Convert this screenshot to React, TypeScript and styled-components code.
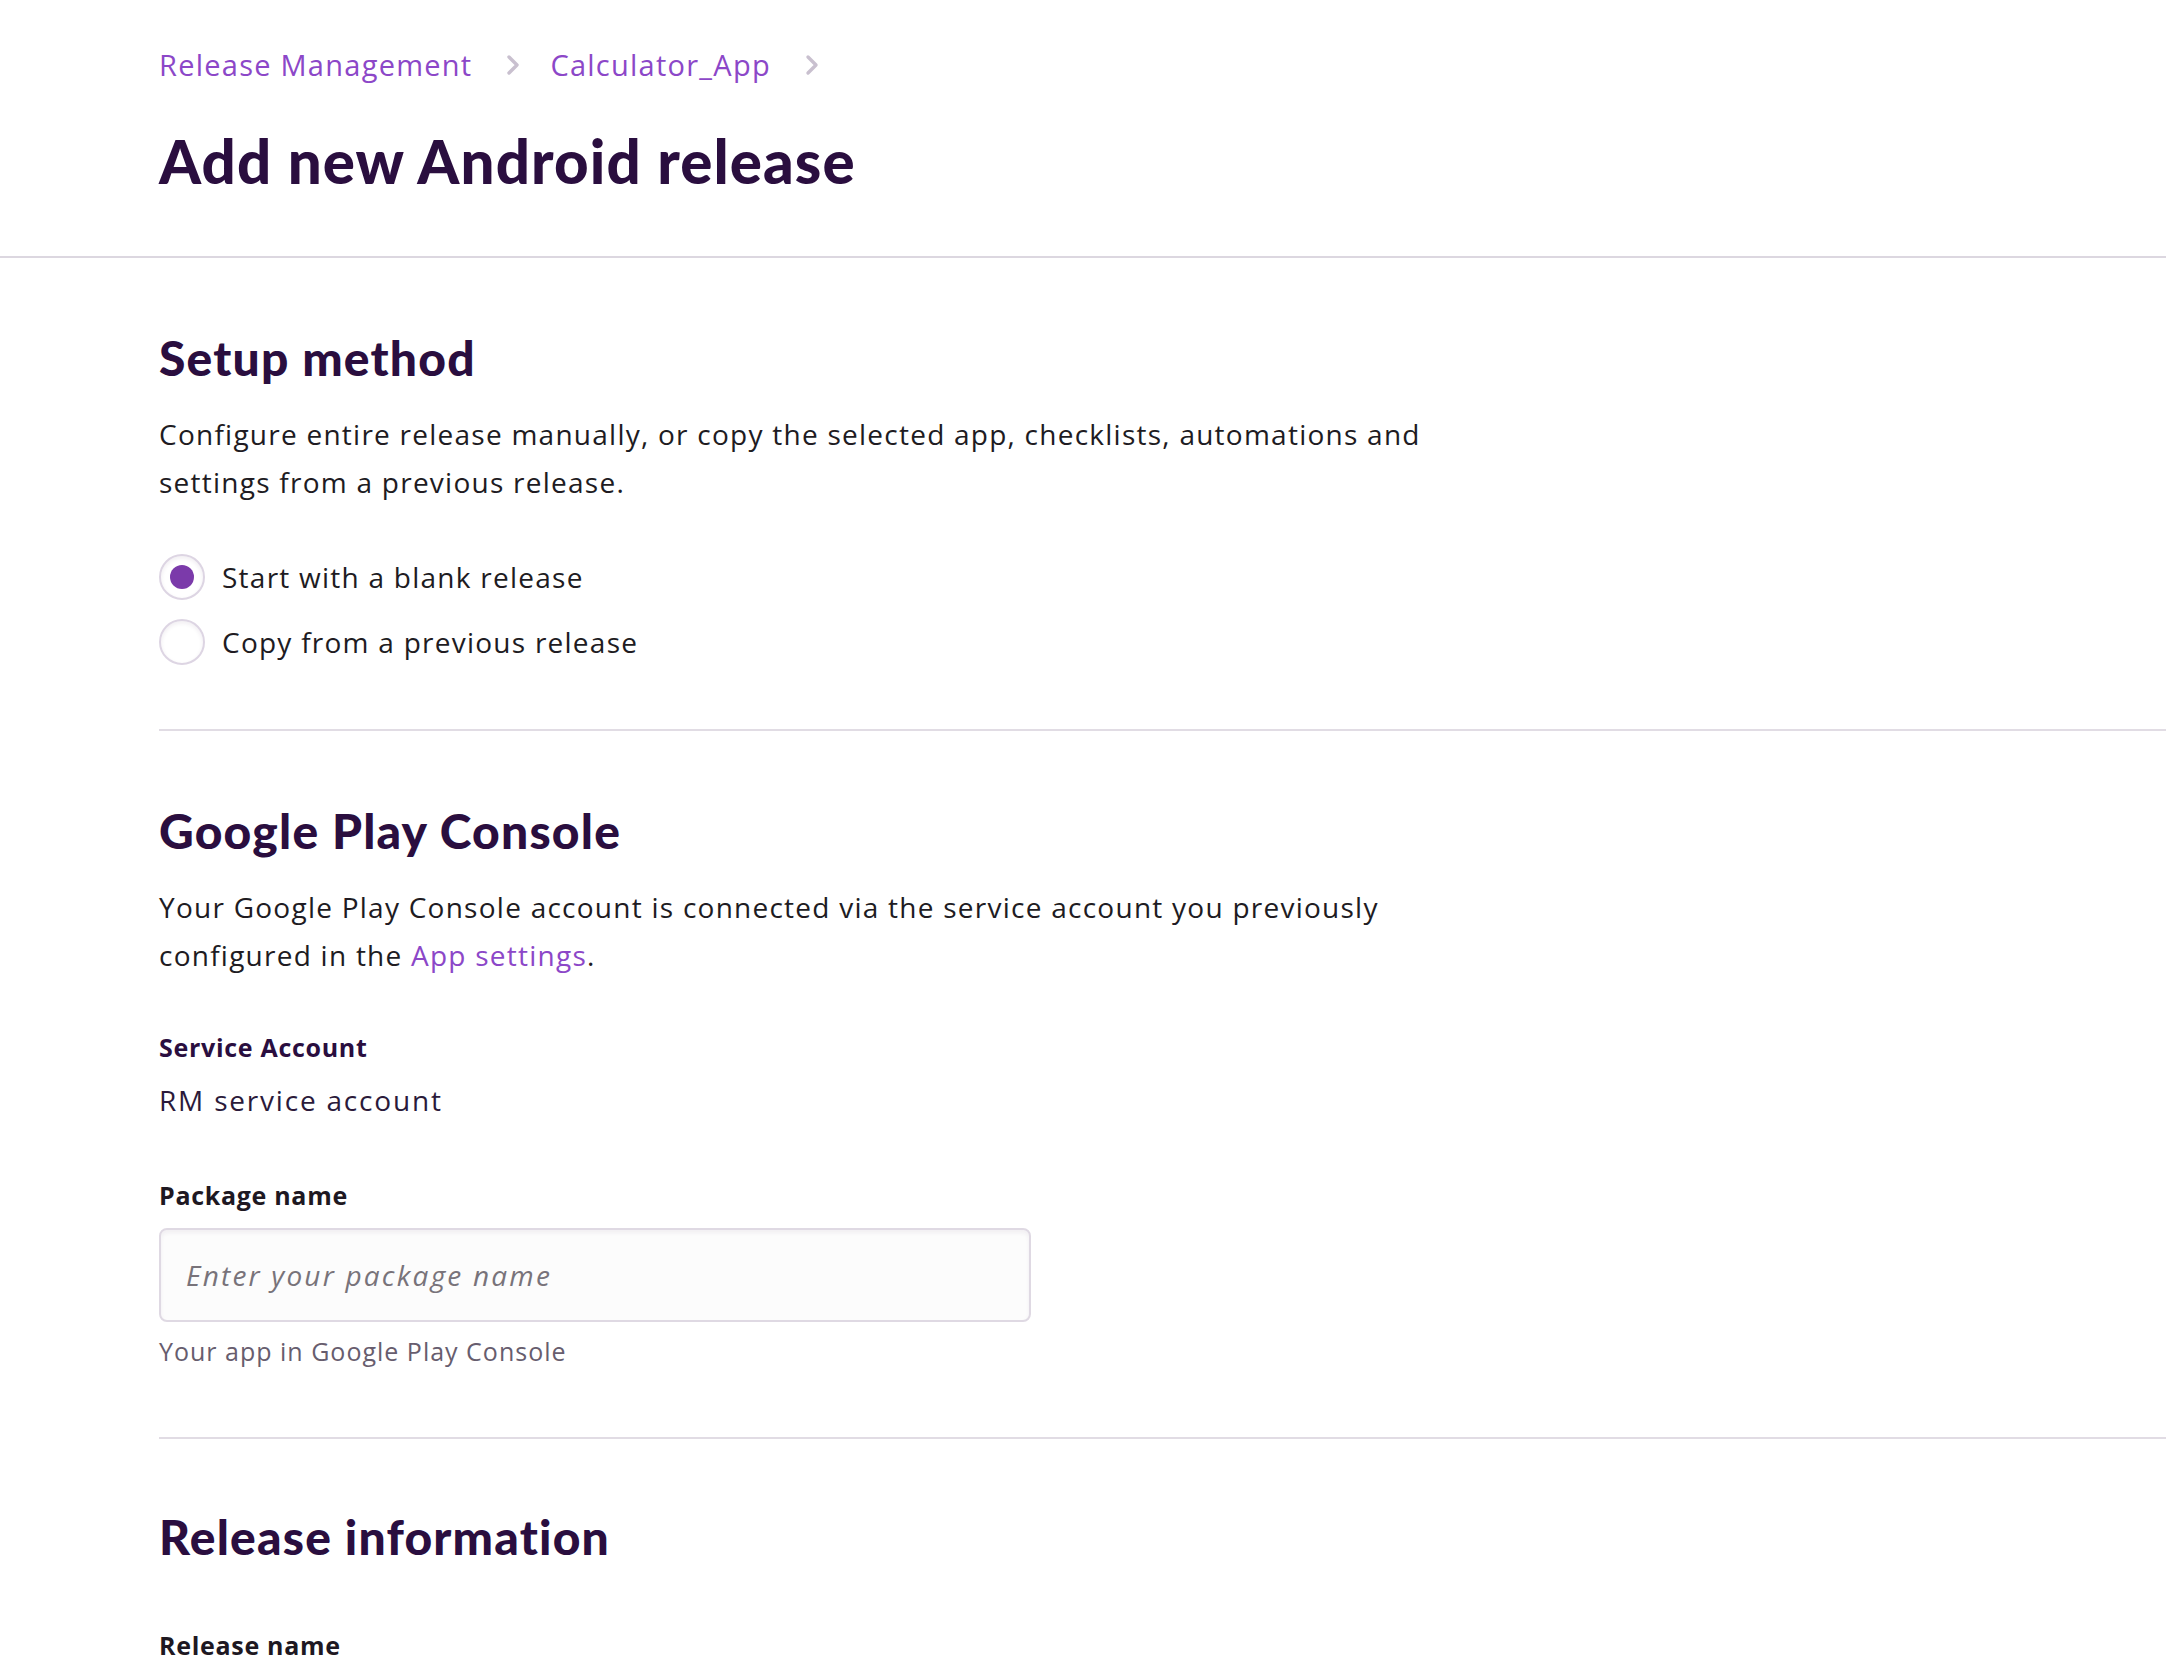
import React from "react";
import styled, { createGlobalStyle } from "styled-components";

const GlobalStyle = createGlobalStyle`
  html, body {
    margin: 0;
    padding: 0;
    background: #ffffff;
    font-family: "Open Sans", "Noto Sans", sans-serif;
    color: #201b22;
  }
  * { box-sizing: border-box; }
`;

const Page = styled.div`
  min-height: 1662px;
  background: #ffffff;
`;

const Header = styled.header`
  padding: 45px 0 60px 159px;
  border-bottom: 2px solid #dcd7e0;
`;

const Breadcrumbs = styled.nav`
  display: flex;
  align-items: center;
  height: 40px;
`;

const Crumb = styled.a`
  font-size: 29px;
  line-height: 40px;
  color: #8c47c8;
  text-decoration: none;
  letter-spacing: 1.25px;
`;

const Chevron = styled.span`
  display: inline-flex;
  align-items: center;
  margin: 0 30px 0 34px;
  color: #c9c0cf;
`;

const Title = styled.h1`
  margin: 41px 0 0;
  font-family: Lato, "Open Sans", sans-serif;
  font-size: 60px;
  line-height: 70px;
  font-weight: 900;
  color: #2a0e3f;
  letter-spacing: 1.1px;
`;

const Main = styled.main`
  padding-left: 159px;
`;

const Section = styled.section<{ $top: number; $bottom: number; $last?: boolean }>`
  padding: ${(p) => p.$top}px 0 ${(p) => p.$bottom}px;
  border-bottom: ${(p) => (p.$last ? "none" : "2px solid #e1dce4")};
`;

const Heading = styled.h2`
  margin: 0;
  font-family: Lato, "Open Sans", sans-serif;
  font-size: 48px;
  line-height: 56px;
  font-weight: 900;
  color: #2a0e3f;
  letter-spacing: 1.2px;
`;

const Paragraph = styled.p`
  margin: 24px 0 0;
  max-width: 1300px;
  font-size: 28px;
  line-height: 48px;
  color: #201b22;
  letter-spacing: 1.25px;
`;

const Link = styled.a`
  color: #8c47c8;
  text-decoration: none;
`;

const RadioGroup = styled.div`
  margin-top: 47px;
  display: flex;
  flex-direction: column;
  gap: 17px;
`;

const RadioRow = styled.label`
  display: flex;
  align-items: center;
  gap: 17px;
  height: 48px;
  font-size: 28px;
  letter-spacing: 1.25px;
  color: #201b22;
  cursor: pointer;
`;

const RadioCircle = styled.span<{ $checked?: boolean }>`
  width: 46px;
  height: 46px;
  border-radius: 50%;
  border: 2px solid #ddd5e3;
  background: #ffffff;
  box-shadow: inset 0 2px 4px rgba(60, 30, 80, 0.08);
  display: inline-flex;
  align-items: center;
  justify-content: center;
  flex-shrink: 0;
  &::after {
    content: "";
    display: ${(p) => (p.$checked ? "block" : "none")};
    width: 24px;
    height: 24px;
    border-radius: 50%;
    background: #7b3aaa;
  }
`;

const FieldLabel = styled.div<{ $mt: number; $purple?: boolean }>`
  margin-top: ${(p) => p.$mt}px;
  font-size: 25px;
  line-height: 32px;
  font-weight: 700;
  letter-spacing: 0.7px;
  color: ${(p) => (p.$purple ? "#2a0e3f" : "#1e1822")};
`;

const FieldValue = styled.div`
  margin-top: 19px;
  font-size: 28px;
  line-height: 36px;
  letter-spacing: 1.8px;
  color: #2b1a3a;
`;

const Input = styled.input`
  display: block;
  margin-top: 17px;
  width: 872px;
  height: 94px;
  padding: 0 25px;
  border: 2px solid #dfd9e3;
  border-radius: 8px;
  background: #fcfcfc;
  box-shadow: inset 0 3px 4px rgba(60, 30, 80, 0.06);
  font-family: inherit;
  font-size: 28px;
  letter-spacing: 2.2px;
  color: #201b22;
  outline: none;
  &::placeholder {
    color: #78737a;
    font-style: italic;
  }
`;

const Helper = styled.div`
  margin-top: 13px;
  font-size: 25px;
  line-height: 32px;
  letter-spacing: 1px;
  color: #675d6e;
`;

const ChevronIcon = () => (
  <svg width="14" height="22" viewBox="0 0 14 22" fill="none">
    <path d="M3 3l8 8-8 8" stroke="currentColor" strokeWidth="3.4" strokeLinecap="round" strokeLinejoin="round" />
  </svg>
);

export default function App() {
  return (
    <Page>
      <GlobalStyle />
      <Header>
        <Breadcrumbs>
          <Crumb href="#">Release Management</Crumb>
          <Chevron><ChevronIcon /></Chevron>
          <Crumb href="#">Calculator_App</Crumb>
          <Chevron><ChevronIcon /></Chevron>
        </Breadcrumbs>
        <Title>Add new Android release</Title>
      </Header>
      <Main>
        <Section $top={72} $bottom={63}>
          <Heading>Setup method</Heading>
          <Paragraph>
            Configure entire release manually, or copy the selected app, checklists, automations and settings from a previous release.
          </Paragraph>
          <RadioGroup>
            <RadioRow>
              <RadioCircle $checked />
              Start with a blank release
            </RadioRow>
            <RadioRow>
              <RadioCircle />
              Copy from a previous release
            </RadioRow>
          </RadioGroup>
        </Section>
        <Section $top={72} $bottom={70}>
          <Heading>Google Play Console</Heading>
          <Paragraph>
            Your Google Play Console account is connected via the service account you previously configured in the{" "}
            <Link href="#">App settings</Link>.
          </Paragraph>
          <FieldLabel $mt={52} $purple>Service Account</FieldLabel>
          <FieldValue>RM service account</FieldValue>
          <FieldLabel $mt={61}>Package name</FieldLabel>
          <Input placeholder="Enter your package name" />
          <Helper>Your app in Google Play Console</Helper>
        </Section>
        <Section $top={70} $bottom={0} $last>
          <Heading>Release information</Heading>
          <FieldLabel $mt={64}>Release name</FieldLabel>
          <Input />
        </Section>
      </Main>
    </Page>
  );
}
